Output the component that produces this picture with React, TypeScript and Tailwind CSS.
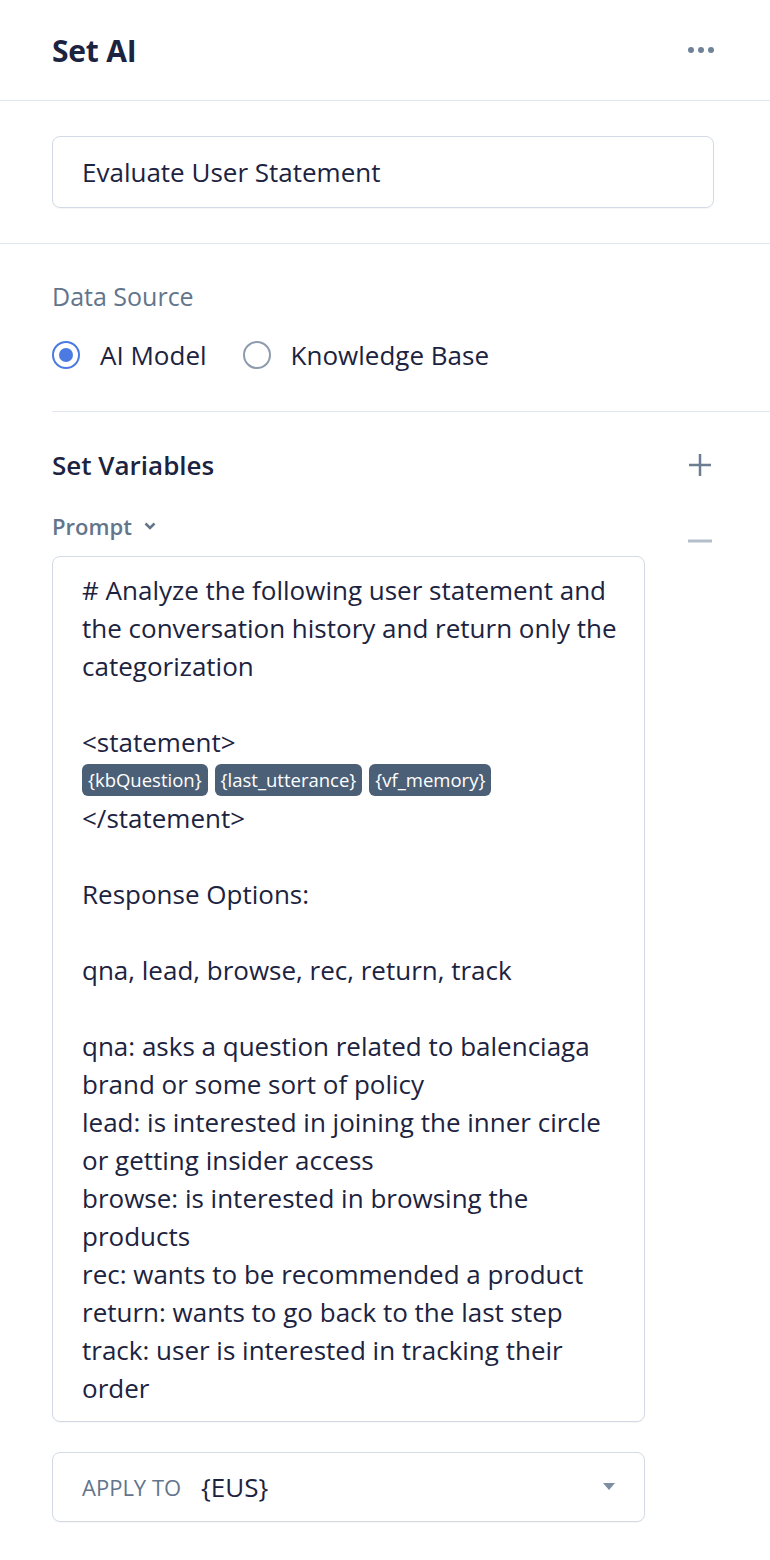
// Set AI step editor panel
const promptLines: (string | null)[] = [
  '# Analyze the following user statement and',
  'the conversation history and return only the',
  'categorization',
  '',
  '<statement>',
  null,
  '</statement>',
  '',
  'Response Options:',
  '',
  'qna, lead, browse, rec, return, track',
  '',
  'qna: asks a question related to balenciaga',
  'brand or some sort of policy',
  'lead: is interested in joining the inner circle',
  'or getting insider access',
  'browse: is interested in browsing the',
  'products',
  'rec: wants to be recommended a product',
  'return: wants to go back to the last step',
  'track: user is interested in tracking their',
  'order',
];

const tags = ['{kbQuestion}', '{last_utterance}', '{vf_memory}'];

function VariableTag({ label }: { label: string }) {
  return (
    <span className="inline-flex h-[32px] items-center rounded-[6px] bg-[#4b5f77] px-[6px] text-[18.5px] text-white">
      {label}
    </span>
  );
}

export default function App() {
  return (
    <div
      className="min-h-[1560px] w-[770px] bg-white text-[#1c2340]"
      style={{ fontFamily: '"Open Sans", "Noto Sans", sans-serif' }}
    >
      {/* Header */}
      <div className="flex h-[101px] items-center justify-between border-b border-[#e3e8ee] pl-[52px] pr-[56px]">
        <h1 className="text-[30px] font-bold tracking-[-0.2px]">Set AI</h1>
        <div className="flex gap-[4px]">
          <span className="h-[6px] w-[6px] rounded-full bg-[#6f8297]" />
          <span className="h-[6px] w-[6px] rounded-full bg-[#6f8297]" />
          <span className="h-[6px] w-[6px] rounded-full bg-[#6f8297]" />
        </div>
      </div>

      {/* Step name */}
      <div className="border-b border-[#e3e8ee] py-[35px] pl-[52px] pr-[56px]">
        <div className="flex h-[72px] items-center rounded-[8px] border border-[#d3dae4] px-[29px] text-[26px] shadow-[0_1px_1px_rgba(0,0,0,0.04)]">
          Evaluate User Statement
        </div>
      </div>

      {/* Data source */}
      <div className="ml-[52px] border-b border-[#e3e8ee] pb-[40px] pt-[36px]">
        <div className="text-[25px] font-medium leading-[32px] text-[#62758b]">Data Source</div>
        <div className="mt-[27px] flex items-center text-[26px] leading-[32px]">
          <span className="flex h-[28px] w-[28px] items-center justify-center rounded-full border-2 border-[#4a7ae2]">
            <span className="h-[14px] w-[14px] rounded-full bg-[#4a7ae2]" />
          </span>
          <span className="ml-[20px]">AI Model</span>
          <span className="ml-[36px] h-[28px] w-[28px] rounded-full border-2 border-[#8d9cad]" />
          <span className="ml-[20px]">Knowledge Base</span>
        </div>
      </div>

      {/* Set variables */}
      <div className="px-[52px] pt-[37px]">
        <div className="flex items-center justify-between">
          <h2 className="text-[26px] font-semibold leading-[32px]">Set Variables</h2>
          <svg width="24" height="24" viewBox="0 0 24 24" className="mr-[6px]">
            <path d="M12 1v22M1 12h22" stroke="#6c7d91" strokeWidth="2.5" />
          </svg>
        </div>

        <div className="mt-[30px] flex">
          <div className="w-[593px]">
            <div className="flex items-center gap-[12px] text-[22px] font-semibold leading-[30px] text-[#62758b]">
              Prompt
              <svg width="12" height="8" viewBox="0 0 12 8">
                <path d="M1.5 1.5L6 6l4.5-4.5" fill="none" stroke="#62758b" strokeWidth="2.5" />
              </svg>
            </div>

            <div className="mt-[15px] rounded-[8px] border border-[#d3dae4] px-[29px] pb-[14px] pt-[14px] text-[26px] leading-[38px] shadow-[0_1px_1px_rgba(0,0,0,0.04)]">
              {promptLines.map((line, i) =>
                line === null ? (
                  <div key={i} className="flex h-[38px] items-center gap-[7px]">
                    {tags.map((t) => (
                      <VariableTag key={t} label={t} />
                    ))}
                  </div>
                ) : (
                  <div key={i} className="h-[38px] whitespace-nowrap">
                    {line}
                  </div>
                )
              )}
            </div>

            <div className="mt-[30px] flex h-[70px] items-center rounded-[8px] border border-[#d3dae4] pl-[29px] pr-[29px] shadow-[0_1px_1px_rgba(0,0,0,0.04)]">
              <span className="text-[22px] uppercase text-[#62758b]">Apply To</span>
              <span className="ml-[20px] text-[26px]">{'{EUS}'}</span>
              <svg width="12" height="8" viewBox="0 0 12 8" className="ml-auto">
                <path d="M0 0h12L6 7z" fill="#7d8ea2" />
              </svg>
            </div>
          </div>

          <div className="flex flex-1 justify-end pr-[6px] pt-[28px]">
            <svg width="24" height="4" viewBox="0 0 24 4">
              <path d="M0 2h24" stroke="#b4bfcb" strokeWidth="3" />
            </svg>
          </div>
        </div>
      </div>
    </div>
  );
}
